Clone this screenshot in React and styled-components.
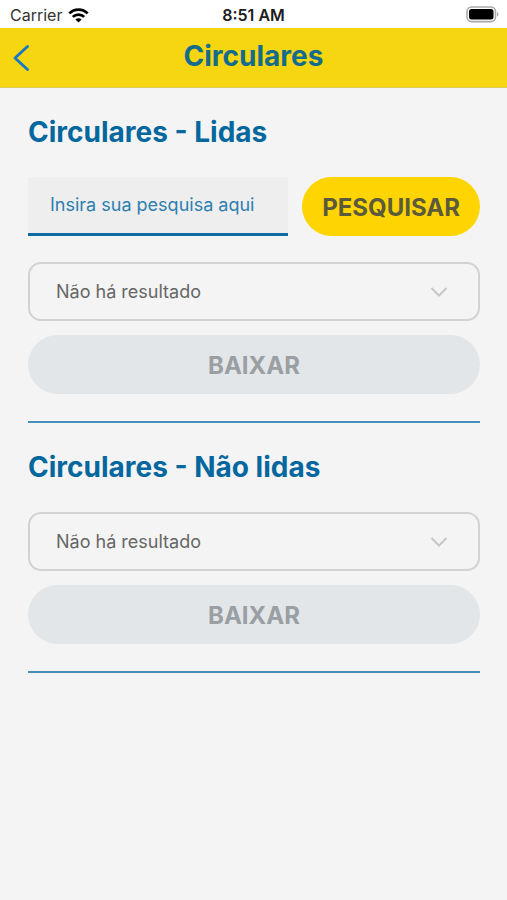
import React from "react";
import styled, { createGlobalStyle } from "styled-components";

const GlobalStyle = createGlobalStyle`
  *, *::before, *::after { box-sizing: border-box; }
  body {
    margin: 0;
    background: #f4f4f4;
    font-family: Inter, "Liberation Sans", sans-serif;
  }
  button, input, select { font: inherit; margin: 0; }
`;

const Screen = styled.div`
  min-height: 100vh;
  background: #f4f4f4;
`;

const StatusBar = styled.div`
  display: grid;
  grid-template-columns: 1fr auto 1fr;
  align-items: center;
  height: 28px;
  padding: 2px 8px 0 8px;
  background: #ffffff;
  color: #1c1c1c;
  font-size: 16px;
  line-height: 20px;
`;

const Carrier = styled.div`
  display: flex;
  align-items: center;
  gap: 6px;
  padding-left: 2px;
  color: #333333;
`;

const Clock = styled.time`
  font-weight: 600;
`;

const BatteryIcon = styled.svg`
  justify-self: end;
`;

const Header = styled.header`
  display: grid;
  grid-template-columns: 48px 1fr 48px;
  align-items: center;
  height: 60px;
  background: #f6d511;
  border-bottom: 1px solid #dccb5a;
`;

const BackButton = styled.button`
  display: flex;
  align-items: center;
  height: 48px;
  padding: 0 0 0 12px;
  border: 0;
  background: none;
  color: #1478c8;
  cursor: pointer;
`;

const Title = styled.h1`
  margin: 0;
  padding-bottom: 4px;
  color: #136c8c;
  font-size: 28px;
  font-weight: 700;
  line-height: 32px;
  text-align: center;
`;

const Content = styled.main`
  padding: 0 27px 0 28px;
`;

const Section = styled.section`
  display: flex;
  flex-direction: column;
  padding: 28px 0 27px;
  border-bottom: 2px solid #4590bb;
`;

const Heading = styled.h2`
  margin: 0 0 28px;
  color: #04679e;
  font-size: 28px;
  font-weight: 700;
  line-height: 33px;
`;

const SearchForm = styled.form`
  display: flex;
  gap: 14px;
  margin-bottom: 26px;
`;

const SearchInput = styled.input`
  flex: 1;
  min-width: 0;
  height: 59px;
  padding: 0 22px 1px;
  border: 0;
  border-bottom: 3px solid #0f6ca3;
  border-radius: 0;
  background: #eeeeee;
  color: #1f78ac;
  font-size: 18px;
  &::placeholder {
    color: #2d80b0;
    opacity: 1;
  }
`;

const PillButton = styled.button`
  height: 59px;
  padding: 1px 20px 0;
  border: 0;
  border-radius: 30px;
  background: ${(p) => (p.$primary ? "#fed500" : "#e3e6e8")};
  color: ${(p) => (p.$primary ? "#5c5a3c" : "#9a9fa3")};
  font-size: 24px;
  font-weight: 700;
  cursor: ${(p) => (p.$primary ? "pointer" : "default")};
`;

const SelectBox = styled.div`
  display: grid;
  align-items: center;
  margin-bottom: 14px;
  > * { grid-area: 1 / 1; }
`;

const Select = styled.select`
  width: 100%;
  height: 59px;
  padding: 0 56px 0 26px;
  appearance: none;
  border: 2px solid #d2d2d2;
  border-radius: 13px;
  background: transparent;
  color: #666666;
  font-size: 18px;
`;

const Chevron = styled.svg`
  justify-self: end;
  margin-right: 32px;
  pointer-events: none;
`;

function ResultPicker({ label }) {
  return (
    <>
      <SelectBox>
        <Select aria-label={label} defaultValue="none">
          <option value="none">Não há resultado</option>
        </Select>
        <Chevron width="18" height="12" viewBox="0 0 18 12" fill="none" aria-hidden="true">
          <path d="M1.5 2 L9 9.5 L16.5 2" stroke="#c6c6c6" strokeWidth="2" />
        </Chevron>
      </SelectBox>
      <PillButton type="button" disabled>BAIXAR</PillButton>
    </>
  );
}

export default function App() {
  return (
    <Screen>
      <GlobalStyle />
      <StatusBar>
        <Carrier>
          <span>Carrier</span>
          <svg width="21" height="15" viewBox="0 0 21 15" fill="none" stroke="#000" strokeWidth="2.7" aria-hidden="true">
            <path d="M1.3 5.4 C6.4 0.3 14.6 0.3 19.7 5.4" />
            <path d="M4.8 8.9 C8 5.8 13 5.8 16.2 8.9" />
            <path d="M7.4 11.4 C9.2 9.8 11.8 9.8 13.6 11.4 L10.5 14.6 Z" fill="#000" stroke="none" />
          </svg>
        </Carrier>
        <Clock>8:51 AM</Clock>
        <BatteryIcon width="33" height="18" viewBox="0 0 33 18" aria-hidden="true">
          <rect x="1" y="1" width="28.5" height="14.6" rx="4.5" fill="#fff" stroke="#aaa" strokeWidth="1.6" />
          <rect x="3" y="3" width="24.5" height="10.6" rx="2.5" fill="#000" />
          <path d="M31 6 C33 6.9 33 9.7 31 10.6 Z" fill="#aaa" />
        </BatteryIcon>
      </StatusBar>
      <Header>
        <BackButton type="button" aria-label="Voltar">
          <svg width="18" height="28" viewBox="0 0 18 28" fill="none" aria-hidden="true">
            <path d="M15.5 2.5 L3 14 L15.5 25.5" stroke="currentColor" strokeWidth="2.8" strokeLinecap="round" strokeLinejoin="round" />
          </svg>
        </BackButton>
        <Title>Circulares</Title>
      </Header>
      <Content>
        <Section>
          <Heading>Circulares - Lidas</Heading>
          <SearchForm onSubmit={(e) => e.preventDefault()}>
            <SearchInput type="text" aria-label="Pesquisa" placeholder="Insira sua pesquisa aqui" />
            <PillButton type="submit" $primary>PESQUISAR</PillButton>
          </SearchForm>
          <ResultPicker label="Circulares lidas" />
        </Section>
        <Section>
          <Heading>Circulares - Não lidas</Heading>
          <ResultPicker label="Circulares não lidas" />
        </Section>
      </Content>
    </Screen>
  );
}
